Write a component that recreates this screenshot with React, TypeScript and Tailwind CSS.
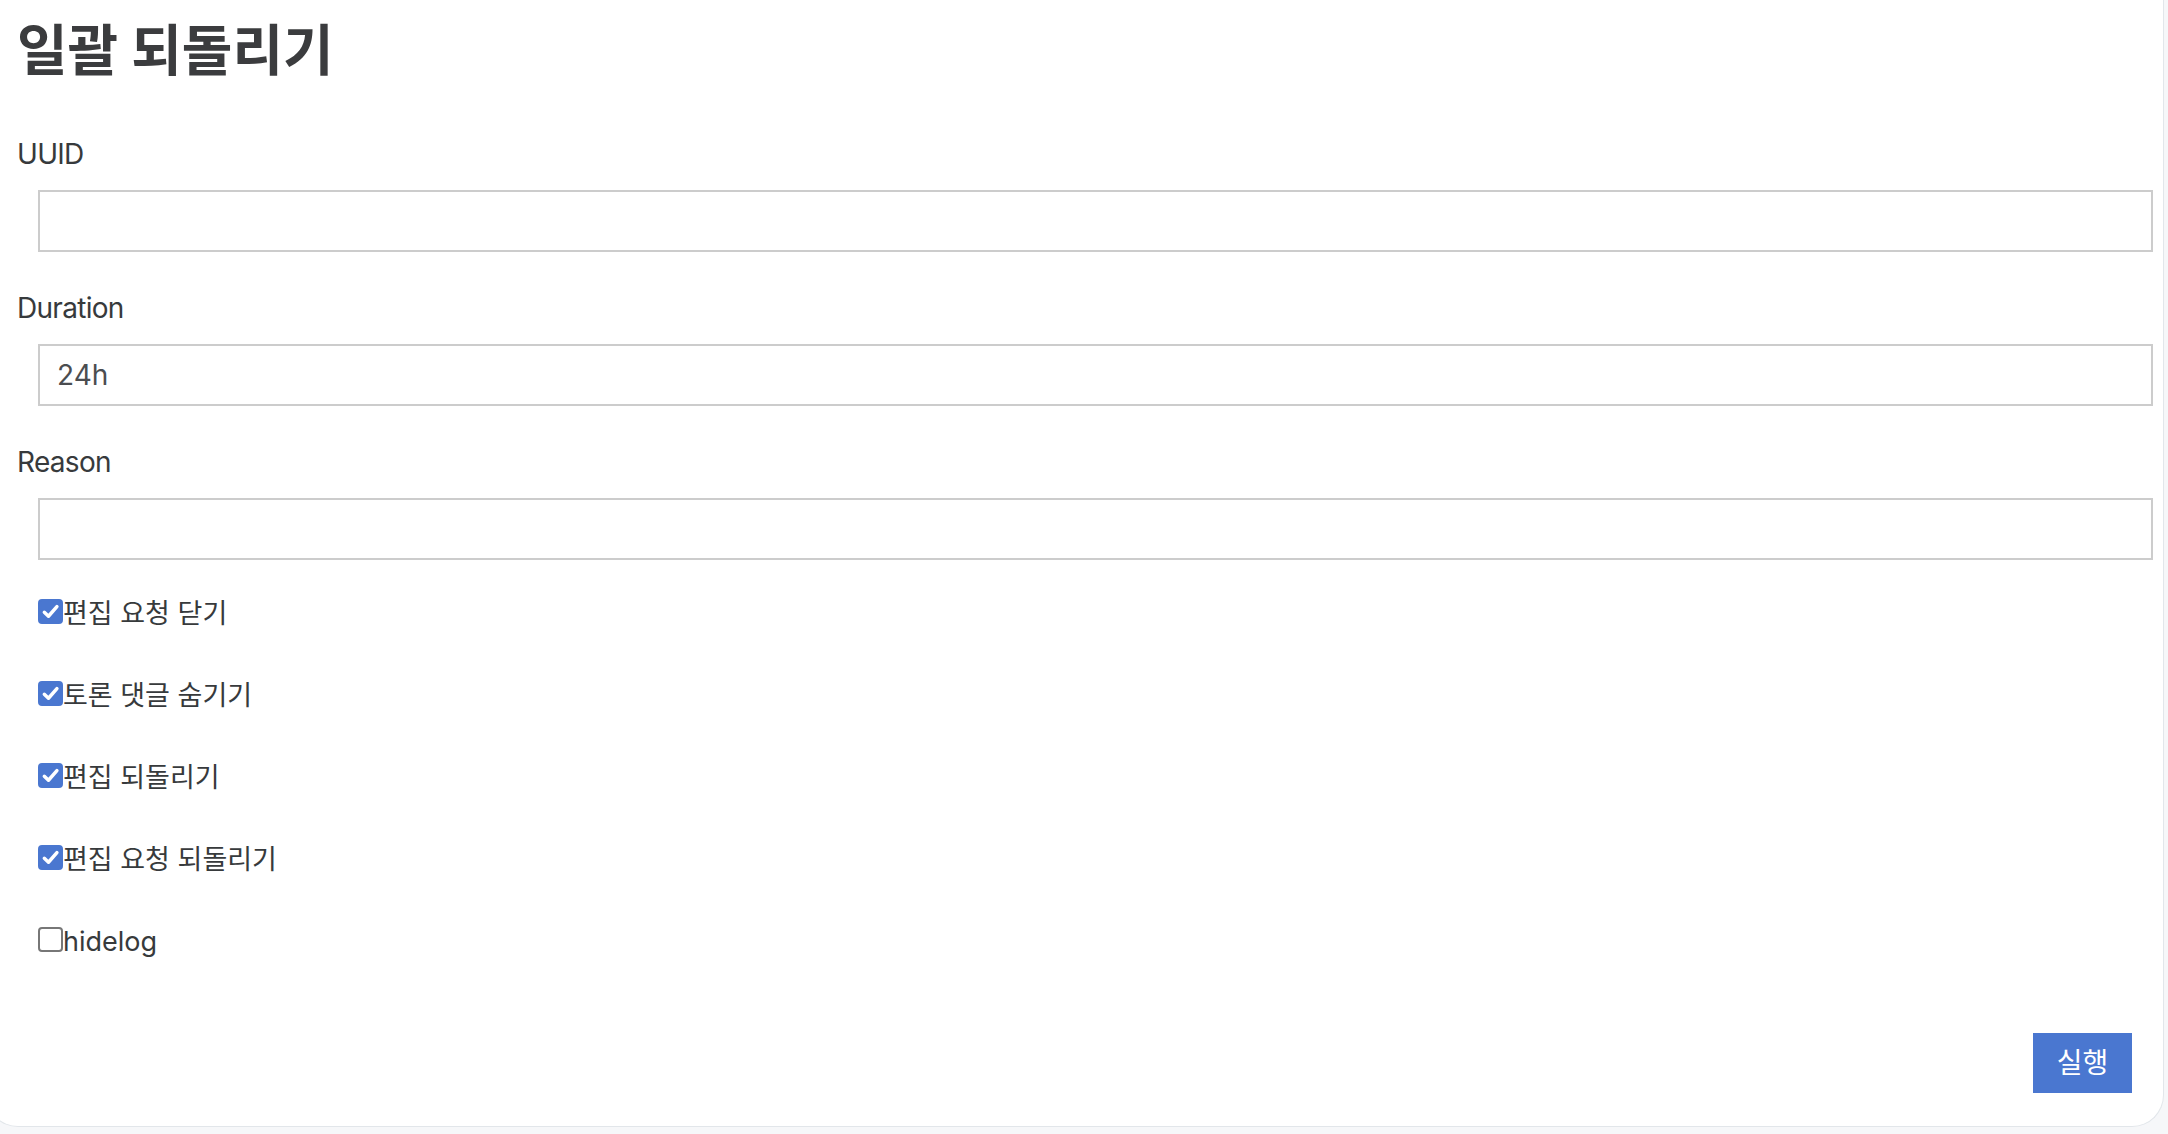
import { useState } from "react"

const fields = [
  { id: "uuid", label: "UUID", value: "" },
  { id: "duration", label: "Duration", value: "24h" },
  { id: "reason", label: "Reason", value: "" },
]

const options = [
  { id: "close-edit-requests", label: "편집 요청 닫기", checked: true },
  { id: "hide-comments", label: "토론 댓글 숨기기", checked: true },
  { id: "revert-edits", label: "편집 되돌리기", checked: true },
  { id: "revert-edit-requests", label: "편집 요청 되돌리기", checked: true },
  { id: "hidelog", label: "hidelog", checked: false },
]

export default function App() {
  const [values, setValues] = useState<Record<string, string>>(
    Object.fromEntries(fields.map((f) => [f.id, f.value]))
  )
  const [checks, setChecks] = useState<Record<string, boolean>>(
    Object.fromEntries(options.map((o) => [o.id, o.checked]))
  )

  return (
    <div
      className="min-h-screen bg-[#f6f7f9] pr-[4px] pb-[10px] overflow-hidden"
      style={{ fontFamily: "Inter, 'Noto Sans CJK KR', sans-serif" }}
    >
      <div className="-ml-[14px] bg-white border-x border-b border-[#e2e6ea] rounded-b-[32px] pl-[30px] pr-[10px] pb-[33px] text-[#373a3c]">
        <h1 className="pt-[17px] text-[55px] leading-[1.2] font-bold text-[#3b3c3e]">일괄 되돌리기</h1>

        <div className="mt-[51px]">
          {fields.map((f) => (
            <div key={f.id} className="mb-[36px]">
              <label htmlFor={f.id} className="block text-[28px] leading-[40px] tracking-[-0.025em]">
                {f.label}
              </label>
              <input
                id={f.id}
                type="text"
                value={values[f.id]}
                onChange={(e) => setValues({ ...values, [f.id]: e.target.value })}
                className="mt-[16px] ml-[21px] block w-[calc(100%-21px)] h-[62px] border-2 border-[#cccccc] px-[17px] text-[28px] text-[#4b4d50] outline-none"
              />
            </div>
          ))}
        </div>

        <div className="ml-[21px] -mt-[2px] flex flex-col gap-[42px]">
          {options.map((o) => (
            <label key={o.id} className="flex items-center text-[27px] leading-[40px] h-[40px] cursor-pointer">
              <input
                type="checkbox"
                checked={checks[o.id]}
                onChange={(e) => setChecks({ ...checks, [o.id]: e.target.checked })}
                className="sr-only"
              />
              <span
                className={`mb-[6px] flex w-[25px] h-[25px] shrink-0 items-center justify-center rounded-[4px] border-2 ${
                  checks[o.id] ? "bg-[#4a77d0] border-[#4a77d0]" : "bg-white border-[#777777]"
                }`}
              >
                {checks[o.id] && (
                  <svg viewBox="0 0 16 16" className="w-[19px] h-[19px]">
                    <path d="M2.8 8.6 L6.3 12 L13.4 3.9" fill="none" stroke="white" strokeWidth="2.9" strokeLinecap="round" strokeLinejoin="round" />
                  </svg>
                )}
              </span>
              <span>{o.label}</span>
            </label>
          ))}
        </div>

        <div className="flex justify-end mt-[71px] pr-[21px]">
          <button className="w-[99px] h-[60px] bg-[#4a77d0] text-white text-[28px]">실행</button>
        </div>
      </div>
    </div>
  )
}
